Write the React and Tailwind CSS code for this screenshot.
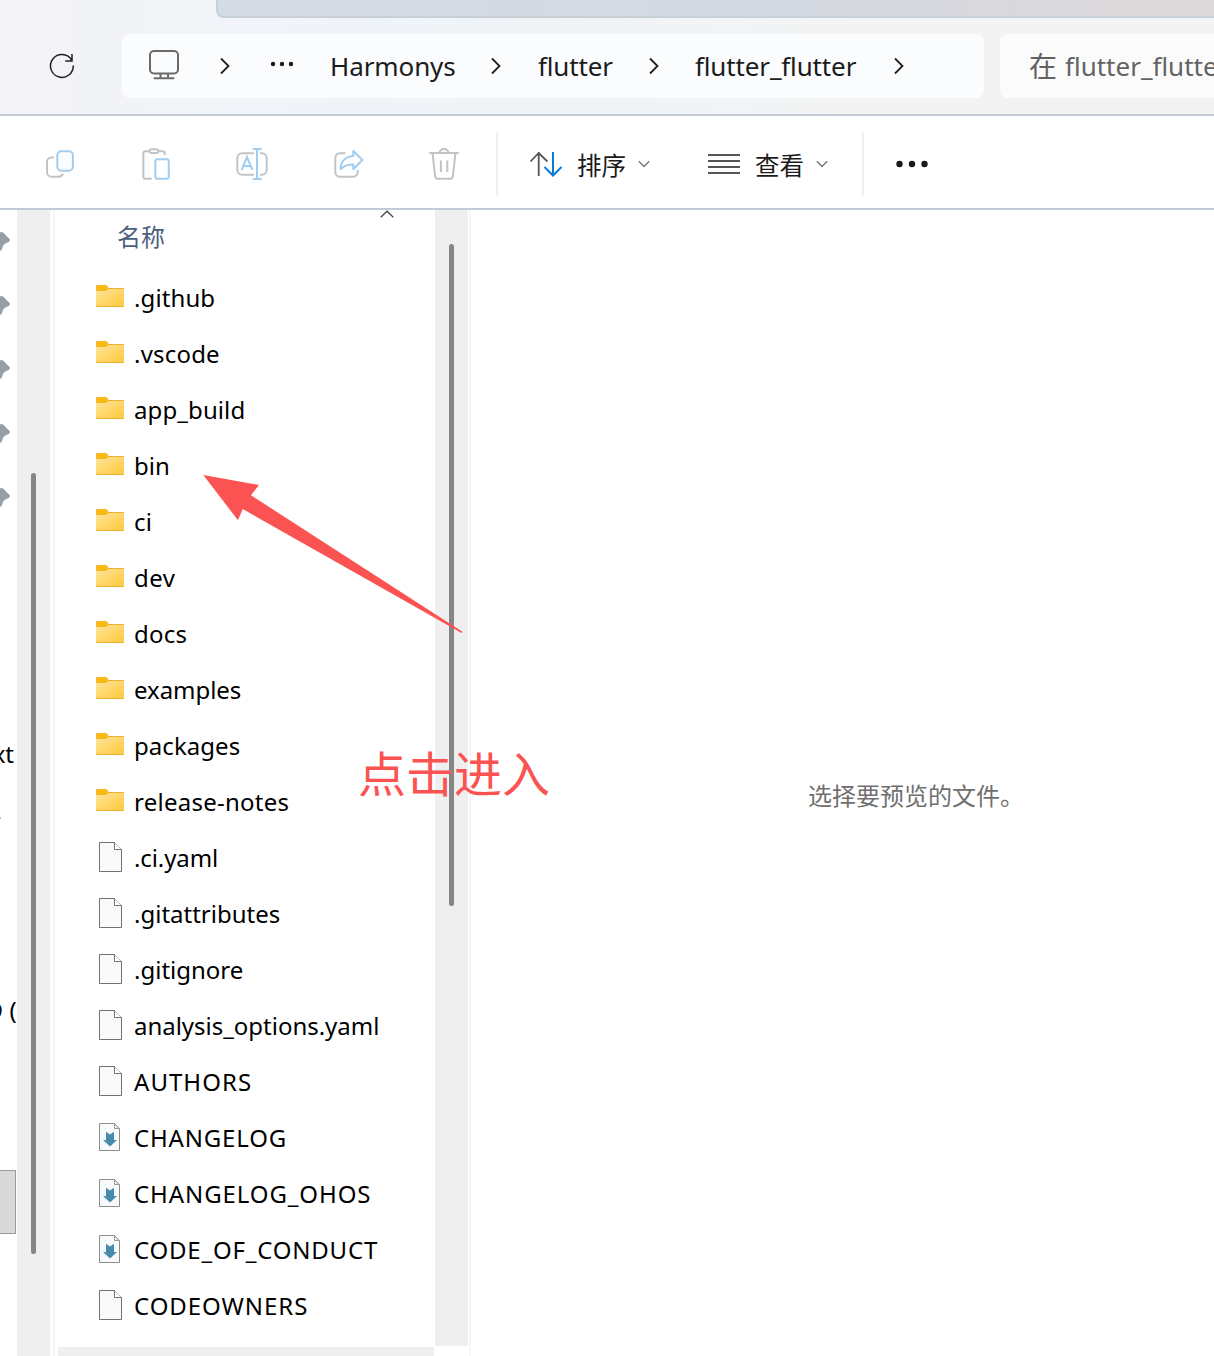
const items = [
  ['folder', '.github', 'tracking-[0.1px]'],
  ['folder', '.vscode', 'tracking-[0.2px]'],
  ['folder', 'app_build', 'tracking-[0.1px]'],
  ['folder', 'bin', 'tracking-normal'],
  ['folder', 'ci', 'tracking-[0.2px]'],
  ['folder', 'dev', 'tracking-[0.5px]'],
  ['folder', 'docs', 'tracking-[0.2px]'],
  ['folder', 'examples', 'tracking-[-0.05px]'],
  ['folder', 'packages', 'tracking-[0.05px]'],
  ['folder', 'release-notes', 'tracking-[0.26px]'],
  ['file', '.ci.yaml', 'tracking-[-0.1px]'],
  ['file', '.gitattributes', 'tracking-normal'],
  ['file', '.gitignore', 'tracking-normal'],
  ['file', 'analysis_options.yaml', 'tracking-[-0.02px]'],
  ['file', 'AUTHORS', 'tracking-[1.05px]'],
  ['markdown', 'CHANGELOG', 'tracking-[0.82px]'],
  ['markdown', 'CHANGELOG_OHOS', 'tracking-[0.9px]'],
  ['markdown', 'CODE_OF_CONDUCT', 'tracking-[0.8px]'],
  ['file', 'CODEOWNERS', 'tracking-[0.95px]'],
];

function Icon({ children, className = '', size = 32 }) {
  return (
    <svg width={size} height={size} viewBox={`0 0 ${size} ${size}`} fill="none" strokeWidth="2" className={`block shrink-0 overflow-visible ${className}`}>
      {children}
    </svg>
  );
}

function Chevron({ className }) {
  return (
    <svg width="10" height="18" viewBox="0 0 10 18" fill="none" stroke="#1f1f1f" strokeWidth="1.8" className={`block shrink-0 ${className}`}>
      <path d="M1 1.500 8.500 9 1 16.500" />
    </svg>
  );
}

function Caret({ className }) {
  return (
    <svg width="12" height="8" viewBox="0 0 12 8" fill="none" stroke="#777" strokeWidth="1.4" className={`block shrink-0 ${className}`}>
      <path d="M.8 1.200 6 6.400l5.200-5.200" />
    </svg>
  );
}

function FileIcon({ kind }) {
  if (kind === 'folder') {
    return (
      <svg width="28" height="22" viewBox="0 0 28 22" className="-mt-1 block">
        <path d="M0 1.500Q0 0 1.500 0H9.500Q10.500 0 11.200 1L12.500 3H27Q28 3 28 4V21Q28 22 27 22H1Q0 22 0 21Z" fill="#eeb02c" />
        <path d="M0 1.500Q0 0 1.500 0H9.500Q10.500 0 11.200 1L12.500 3 11 5.500H0Z" fill="#fbb917" />
        <path d="M0 6H9.500Q10.500 6 11.300 5L12.300 4H28V20.500Q28 21 27.500 21H.5Q0 21 0 20.500Z" fill="url(#folder)" />
      </svg>
    );
  }
  if (kind === 'file') {
    return (
      <svg width="28" height="30" viewBox="0 0 28 30" className="-mt-0.5 block">
        <path d="M3.500.5H18.500L25.500 7.500V29.500H3.500Z" fill="#f9f9f9" stroke="#727272" />
        <path d="M18.500.5V7.500H25.500" fill="#fff" stroke="#727272" />
      </svg>
    );
  }
  return (
    <svg width="28" height="28" viewBox="0 0 28 28" className="-mt-0.5 block">
      <path d="M3.500.5H18.500L23.500 5.500V27.500H3.500Z" fill="#f7fafc" stroke="#8d8d8d" />
      <path d="M18.500.5V5.500H23.500Z" fill="#e4e4e4" stroke="#999" />
      <path d="M10 8.800 14 11.500 18 8.800V17H21L14 23.500 7 17H10Z" fill="#478aa9" />
    </svg>
  );
}

function AddressBar() {
  return (
    <header className="relative h-[116px] shrink-0 border-b-2 border-[#c3cbd7] bg-linear-to-r from-[#f3f3f8] via-[#eff4f8] via-35% to-[#f3f3f3] to-75%">
      <div className="ml-[216px] h-[18px] rounded-bl-lg border-b-2 border-l-2 border-[#c8d0d8] bg-linear-to-r from-[#d3dbe5] via-[#d5d9e1] via-60% to-[#ddd8d9]" />
      <div className="mt-4 flex h-16">
        <div className="flex w-[122px] shrink-0 items-center pl-12">
          <Icon size={28} className="stroke-[#1f1f1f]">
            <path strokeWidth="1.500" d="M25.300 13.500A11.400 11.400 0 1 1 23.500 7.800M24 2V9H17.200" />
          </Icon>
        </div>
        <nav className="flex w-[862px] shrink-0 items-center rounded-lg bg-[#fbfcfd] text-[26px] text-[#1b1b1b]">
          <Icon className="ml-[27px] stroke-[#6a6a6a]">
            <rect x="1" y="1" width="28" height="22.500" rx="4" />
            <path d="M11.500 24v4M19 24v4M5.500 28.300h19" strokeLinecap="round" />
          </Icon>
          <Chevron className="ml-[39px]" />
          <svg width="24" height="6" viewBox="0 0 24 6" fill="#1b1b1b" className="-mt-1 ml-10 block">
            <circle cx="3" cy="3" r="2.200" /><circle cx="12" cy="3" r="2.200" /><circle cx="21" cy="3" r="2.200" />
          </svg>
          <span className="ml-9 w-[126px] tracking-[-0.1px] whitespace-nowrap">Harmonys</span>
          <Chevron className="ml-[35px]" />
          <span className="ml-[37px] w-[75px] tracking-[-0.15px] whitespace-nowrap">flutter</span>
          <Chevron className="ml-[36px]" />
          <span className="ml-[36px] w-[162px] tracking-[-0.14px] whitespace-nowrap">flutter_flutter</span>
          <Chevron className="ml-[37px]" />
        </nav>
        <div className="ml-4 flex flex-1 items-center overflow-hidden rounded-l-lg bg-[#fbfbfb] pl-[29px] text-[26px] whitespace-nowrap text-[#636363]">
          <span className="mr-2 w-7 text-[28px]">在</span>
          <span>flutter_flutter</span>
        </div>
      </div>
    </header>
  );
}

function Toolbar() {
  return (
    <div className="flex h-[94px] shrink-0 items-center border-b-2 border-[#c3cad5] bg-white pt-1 text-2xl text-[#1b1b1b]">
      <div className="flex gap-16 pl-11">
        <Icon className="stroke-[#c3c3c3]">
          <path d="M10 9.500H7.500A4.500 4.500 0 0 0 3 14v10.200a4.500 4.500 0 0 0 4.500 4.500h7.300a4.500 4.500 0 0 0 4.200-3" />
          <rect x="13.300" y="3.300" width="15.600" height="19.500" rx="4" stroke="#a1cdf1" fill="#fcfcfc" />
        </Icon>
        <Icon className="stroke-[#c3c3c3]">
          <path d="M9 3.300H5.300a2 2 0 0 0-2 2v23.400a2 2 0 0 0 2 2h6.400M18.500 3.300h4.200a2 2 0 0 1 2 2V7" fill="#fcfcfc" />
          <rect x="9.500" y="1.200" width="8.800" height="3.800" rx="1.900" fill="#fff" />
          <rect x="15.300" y="11.300" width="13.500" height="19.400" rx="2" stroke="#a1cdf1" fill="#fff" />
        </Icon>
        <Icon className="stroke-[#c3c3c3]">
          <path d="M18 5.300H6.300a5 5 0 0 0-5 5v11.400a5 5 0 0 0 5 5H18M24 5.300h1.700a5 5 0 0 1 5 5v11.400a5 5 0 0 1-5 5H24" />
          <path d="M21 1v30M16.700 1h9M16.700 31h9M5.500 22 11 9l5.500 13M7.500 18h7" stroke="#a1cdf1" />
        </Icon>
        <Icon className="stroke-[#c3c3c3]">
          <path d="M13.500 5.300H7.800a4.500 4.500 0 0 0-4.500 4.500v14.400a4.500 4.500 0 0 0 4.500 4.500h13.400a4.500 4.500 0 0 0 4.500-4.500V22" />
          <path d="M21.300 3V8C13 8.500 8.500 14 8.500 21.200 12 17.500 15.500 16.500 21.300 16.500V21.200L30.300 12Z" stroke="#a1cdf1" strokeLinejoin="round" />
        </Icon>
        <Icon className="stroke-[#c3c3c3]">
          <path d="M1.300 5h29.400M11.500 5a4.500 4 0 0 1 9 0M4.500 5 7.200 28.500a2.500 2.500 0 0 0 2.500 2.300h12.600a2.500 2.500 0 0 0 2.500-2.300L27.500 5M12.900 12.500v11.500M19.300 12.500v11.500" />
        </Icon>
      </div>
      <div className="ml-9 h-16 w-0.5 bg-[#efefef]" />
      <Icon className="ml-8 stroke-[#555]">
        <path d="M8.700 28V4M.5 13.500 8.700 5l8.700 8.500" strokeWidth="1.800" />
        <path d="M23 4v24M14.500 19l8.500 8.500L31.500 19" stroke="#0b7bd7" />
      </Icon>
      <span className="ml-[15px] mt-1 w-[49px] text-[24.5px]">排序</span>
      <Caret className="ml-3" />
      <Icon className="ml-[58px] stroke-[#555]">
        <path d="M0 7h32M0 13h32M0 19h32M0 25h32" />
      </Icon>
      <span className="ml-[15px] mt-1 w-[49px] text-[24.5px]">查看</span>
      <Caret className="ml-3" />
      <div className="ml-[34px] h-16 w-0.5 bg-[#efefef]" />
      <svg width="34" height="8" viewBox="0 0 34 8" fill="#1b1b1b" className="ml-[31px] block">
        <circle cx="4.500" cy="4" r="3.200" /><circle cx="17" cy="4" r="3.200" /><circle cx="29.500" cy="4" r="3.200" />
      </svg>
    </div>
  );
}

function Sidebar() {
  return (
    <aside className="flex h-full w-[17px] shrink-0 flex-col overflow-hidden bg-white text-2xl text-black">
      {[0, 1, 2, 3, 4].map((i) => (
        <svg key={i} width="10" height="64" viewBox="0 0 10 64" fill="#95a0a5" className="block shrink-0">
          <path d="M0 22.500 1.500 22 3 22.500 9.500 29Q10.500 30.500 9 31.800L4.500 34Q3.500 34.500 3 36L1.500 40 0 41Z" />
        </svg>
      ))}
      <div className="mt-[192px] flex h-16 w-[14px] items-center justify-end whitespace-nowrap">xt</div>
      <div className="mt-[31px] h-[2px] w-px bg-[#bbb]" />
      <div className="mt-[159px] flex h-16 w-[17px] items-center justify-end tracking-[0.2px] whitespace-pre">D (</div>
      <div className="mt-32 h-16 w-4 border-y border-r border-[#999] bg-[#d9d9d9]" />
    </aside>
  );
}

function FileList() {
  return (
    <main className="flex h-full w-[380px] shrink-0 flex-col bg-white">
      <div className="flex h-[60px] shrink-0 items-start">
        <span className="ml-[62px] mt-[9px] w-12 text-2xl leading-9 text-[#4c607d]">名称</span>
        <svg width="14" height="8" viewBox="0 0 14 8" fill="none" stroke="#444" strokeWidth="1.200" className="ml-[215px] block">
          <path d="M.7 7.300 7 1.200l6.300 6.100" />
        </svg>
      </div>
      <ul>
        {items.map(([kind, name, tracking]) => (
          <li key={name} className="flex h-14 items-center pl-[41px]">
            <span className="flex w-[38px] items-center"><FileIcon kind={kind} /></span>
            <span className={`text-2xl whitespace-nowrap text-black ${tracking}`}>{name}</span>
          </li>
        ))}
      </ul>
      <div className="ml-[3px] mt-auto h-[9px] w-[376px] bg-[#efefef]" />
    </main>
  );
}

export default function App() {
  return (
    <div className="relative flex h-[1356px] w-[1214px] flex-col overflow-hidden bg-white font-['Noto_Sans','Noto_Sans_CJK_SC',sans-serif]">
      <svg width="0" height="0" className="absolute">
        <linearGradient id="folder" x1="0" y1="0" x2="1" y2="1">
          <stop stopColor="#ffe69c" /><stop offset="1" stopColor="#fec83a" />
        </linearGradient>
      </svg>
      <AddressBar />
      <Toolbar />
      <div className="flex h-[1146px]">
        <Sidebar />
        <div className="h-full w-[33px] shrink-0 bg-[#efefef] pl-3.5 pt-[263px]">
          <div className="h-[781px] w-[5px] rounded-full bg-[#868686]" />
        </div>
        <div className="ml-[3px] h-full w-0.5 shrink-0 bg-[#f6f6f6]" />
        <FileList />
        <div className="h-[1136px] w-[33px] shrink-0 bg-[#efefef] pl-3.5 pt-[34px]">
          <div className="h-[662px] w-[5px] rounded-full bg-[#868686]" />
        </div>
        <div className="ml-px h-full w-0.5 shrink-0 bg-[#f7f7f7]" />
        <section className="flex flex-1 items-center bg-white pl-[337px] pt-[25px]">
          <p className="text-2xl whitespace-nowrap text-[#6f6f6f]">选择要预览的文件。</p>
        </section>
      </div>
      <svg width="262" height="162" viewBox="0 0 262 162" className="absolute left-[202px] top-[473px]">
        <path d="M1.300 2 56.900 12 49 22.300 260.500 158.700 259.500 160 40.700 36 36 47.300Z" fill="#fb5351" />
      </svg>
      <div className="absolute left-[358px] top-[738px] text-5xl leading-[72px] whitespace-nowrap text-[#fb5351]">点击进入</div>
    </div>
  );
}
